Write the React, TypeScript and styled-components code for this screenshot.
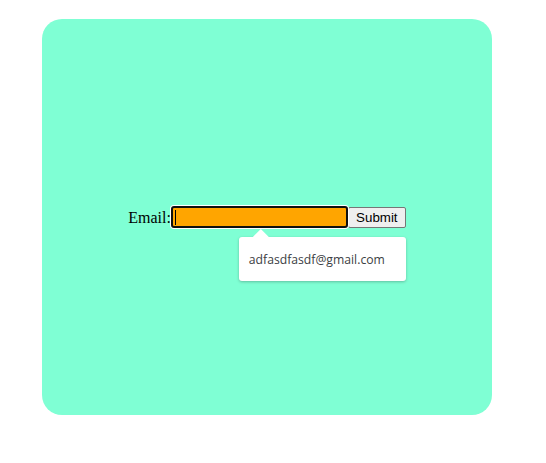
import React from "react";
import styled, { createGlobalStyle } from "styled-components";

const GlobalStyle = createGlobalStyle`
  html, body {
    margin: 0;
    padding: 0;
    background: #ffffff;
  }
  body {
    font-family: "Liberation Serif", "Times New Roman", serif;
  }
`;

const Page = styled.div`
  padding: 19px 0 0 42px;
`;

const Card = styled.div`
  width: 450px;
  height: 396px;
  background: #7fffd4;
  border-radius: 20px;
  display: flex;
  align-items: center;
  justify-content: center;
`;

const Form = styled.form`
  display: flex;
  align-items: center;
  margin: 0;
`;

const Label = styled.label`
  font-family: "Liberation Serif", "Times New Roman", serif;
  font-size: 16px;
  color: #000;
  line-height: 22px;
  padding-top: 2px;
`;

const InputWrap = styled.div`
  position: relative;
  display: flex;

  &::after {
    content: "";
    position: absolute;
    left: 4px;
    top: 4px;
    width: 1px;
    height: 15px;
    background: #000;
  }
`;

const EmailInput = styled.input`
  box-sizing: border-box;
  width: 177px;
  height: 22px;
  margin: 0;
  padding: 1px 2px;
  border: 2px solid #101010;
  border-radius: 3px;
  box-shadow: 0 0 0 1px #ffffff;
  background: #ffa500;
  outline: none;
  caret-color: transparent;
  font-family: "Liberation Sans", Arial, sans-serif;
  font-size: 13.33px;
`;

const SubmitButton = styled.button`
  box-sizing: border-box;
  width: 58px;
  height: 21px;
  margin: 0;
  padding: 1px 6px;
  background: #efefef;
  border: 1px solid #767676;
  border-radius: 2px;
  font-family: "Liberation Sans", Arial, sans-serif;
  font-size: 13.33px;
  color: #000;
`;

const Suggestion = styled.div`
  position: absolute;
  left: 68px;
  top: 31px;
  width: 167px;
  height: 44px;
  box-sizing: border-box;
  padding: 0 10px;
  background: #ffffff;
  border-radius: 3px;
  box-shadow: 0 1px 3px rgba(0, 0, 0, 0.25);
  display: flex;
  align-items: center;
  font-family: "Open Sans", "Noto Sans", sans-serif;
  font-size: 12.2px;
  color: #3c4043;
  white-space: nowrap;
  z-index: 2;

  &::before {
    content: "";
    position: absolute;
    left: 14px;
    top: -8px;
    width: 16px;
    height: 8px;
    background: #ffffff;
    clip-path: polygon(50% 0, 100% 100%, 0 100%);
  }
`;

export default function App() {
  return (
    <>
      <GlobalStyle />
      <Page>
        <Card>
          <Form onSubmit={(e) => e.preventDefault()}>
            <Label htmlFor="email">Email:</Label>
            <InputWrap>
              <EmailInput id="email" type="email" />
              <Suggestion>adfasdfasdf@gmail.com</Suggestion>
            </InputWrap>
            <SubmitButton type="submit">Submit</SubmitButton>
          </Form>
        </Card>
      </Page>
    </>
  );
}
